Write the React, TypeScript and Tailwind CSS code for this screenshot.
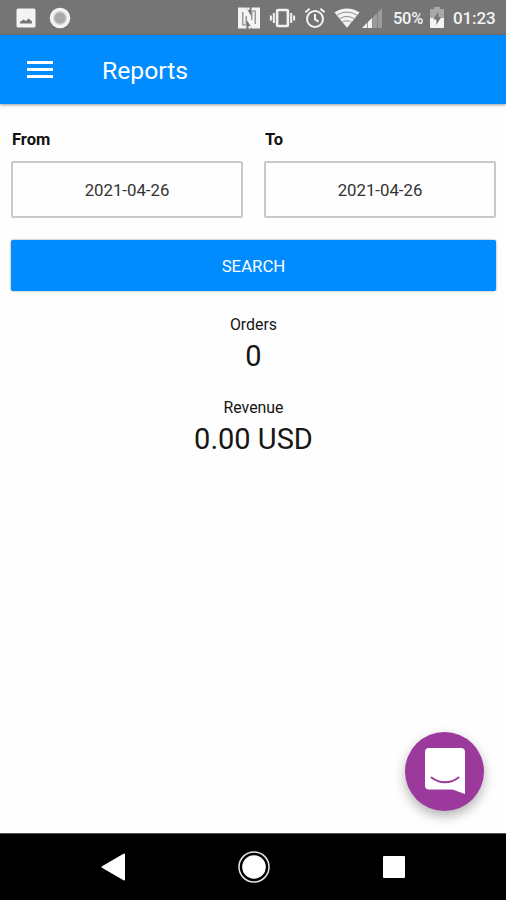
import type { ReactNode } from 'react';

function StatusBar() {
  return (
    <div className="flex h-[35px] flex-shrink-0 items-center bg-[#757575] pl-4 pr-[10px] text-[#f3f3f3]">
      <svg viewBox="0 0 20 20" className="h-5 w-5" fill="currentColor">
        <path fillRule="evenodd" d="M2 0.5h16a1.5 1.5 0 0 1 1.5 1.5v16a1.5 1.5 0 0 1-1.5 1.500H2A1.5 1.5 0 0 1 .5 18V2A1.5 1.5 0 0 1 2 .5zM4 15.500h12v-2l-3.400-3-2.600 2.500-2.600-1.500L4 14z" />
      </svg>
      <svg viewBox="0 0 22 22" className="ml-[12.500px] h-[22px] w-[22px]">
        <circle cx="11" cy="11" r="10.3" fill="currentColor" />
        <circle cx="11" cy="11" r="6" fill="#a9a9a9" stroke="#c6c6c6" strokeWidth="1.5" />
      </svg>

      <div className="ml-auto flex items-center">
        {/* NFC */}
        <svg viewBox="0 0 22 22" className="h-[22px] w-[22px]">
          <path d="M0 .5h8l5.500 9V.500H22v21h-8l-5.500-9v9H0z" fill="currentColor" />
          <path d="M8.500 .5h3v2.500h-2zM10.500 19h2l1 2.500h-3z" fill="currentColor" />
          <path d="M4.800 5v13h3.400V9M17.200 17V4h-3.400v9" fill="none" stroke="#858585" strokeWidth="1.200" />
        </svg>
        {/* Vibrate */}
        <svg viewBox="0 0 28 22" className="ml-[9px] h-[22px] w-7" fill="none" stroke="currentColor" strokeWidth="2">
          <rect x="8.100" y="3" width="10.800" height="16" rx="1" strokeWidth="2.600" />
          <path d="M4.800 6v10M1.900 8.500v5M22.200 6v10M25.100 8.500v5" />
        </svg>
        {/* Alarm */}
        <svg viewBox="0 0 22 22" className="ml-[7px] h-[22px] w-[22px]" fill="none" stroke="currentColor" strokeWidth="2">
          <circle cx="11" cy="12" r="8" />
          <path d="M11 7v5.400l3.600 2.200M1.400 5.300l4.200-3.500M20.600 5.300l-4.200-3.500" />
        </svg>
        {/* Wifi */}
        <svg viewBox="0 0 26 20" className="ml-2 h-5 w-[26px]">
          <path d="M.5 4.5C8 -1 18 -1 25.500 4.500L13 19.800z" fill="currentColor" />
          <path d="M2.600 7.500C9 3 17 3 23.400 7.500M5.500 11C10 7.700 16 7.700 20.500 11M8.300 14.400C11 12.300 15 12.300 17.700 14.400" fill="none" stroke="#8c8c8c" strokeWidth="1" />
        </svg>
        {/* Signal */}
        <svg viewBox="0 0 20 20" className="ml-[2px] h-5 w-5">
          <path d="M20 0v20H0z" fill="#9b9b9b" />
          <path d="M10.500 9.500V20H0z" fill="currentColor" />
          <path d="M5.500 10v10M10.500 5v15M15.500 0v20" stroke="#757575" strokeWidth=".7" />
        </svg>
        <span className="ml-[11px] w-8 whitespace-nowrap pt-[3px] text-[16.500px] font-medium tracking-[-0.3px]">50%</span>
        {/* Battery */}
        <svg viewBox="0 0 14 21" className="ml-[5px] h-[21px] w-[14px]">
          <path d="M4 0h6v2h3q1 0 1 1v8H0V3q0-1 1-1h3z" fill="#a9a9a9" />
          <path d="M0 11h14v9q0 1-1 1H1q-1 0-1-1z" fill="currentColor" />
          <path d="M8.300 4.500L3.200 12.500h3.200v5.500l4.800-8H8.300z" fill="#757575" />
        </svg>
        <span className="ml-[9px] w-[43px] whitespace-nowrap pt-[2px] text-[17px] font-medium tracking-[-0.1px]">01:23</span>
      </div>
    </div>
  );
}

function DateField({ label, value }: { label: string; value: string }) {
  return (
    <div className="flex-1">
      <p className="pl-px text-[16.500px] font-bold leading-5 text-[#111]">{label}</p>
      <button className="mt-[11px] flex h-[57px] w-full items-center justify-center rounded-[2px] border-2 border-[#c9c9c9] pt-[3px] text-[16.800px] text-[#333]">
        {value}
      </button>
    </div>
  );
}

function Stat({ label, children }: { label: string; children: ReactNode }) {
  return (
    <div className="h-[83px] text-center text-[#161616]">
      <p className="text-[15.900px] leading-5">{label}</p>
      <p className="mt-[3px] text-[29px] leading-9">{children}</p>
    </div>
  );
}

export default function App() {
  return (
    <div className="relative flex h-[900px] w-[506px] flex-col overflow-hidden bg-[#fefefe] font-['Roboto',sans-serif]">
      <StatusBar />

      <header className="flex h-[69px] flex-shrink-0 items-center bg-[#008cff] pl-[27px] text-white shadow-[0_1px_3px_rgba(0,0,0,0.4)]">
        <button aria-label="Menu" className="flex w-[26px] flex-col gap-1">
          <span className="h-[3px] bg-white" />
          <span className="h-[3px] bg-white" />
          <span className="h-[3px] bg-white" />
        </button>
        <h1 className="ml-[49px] pt-[3px] text-[24.700px]">Reports</h1>
      </header>

      <main className="flex-1 pl-[11px] pr-2.5 pt-[26px]">
        <div className="flex gap-[21px]">
          <DateField label="From" value="2021-04-26" />
          <DateField label="To" value="2021-04-26" />
        </div>
        <button className="mt-[22px] flex h-[51px] w-full items-center justify-center rounded-[2px] bg-[#008cff] pt-[2px] text-[16.800px] text-white shadow-[0_0_2px_rgba(0,0,0,0.5)]">
          SEARCH
        </button>
        <div className="mt-6">
          <Stat label="Orders">0</Stat>
          <Stat label="Revenue">0.00 USD</Stat>
        </div>
      </main>

      {/* Chat launcher */}
      <button aria-label="Chat" className="absolute bottom-[89.500px] right-[22px] flex h-[79px] w-[79px] items-center justify-center rounded-full bg-[#9b3a9c] shadow-[0_5px_12px_rgba(0,0,0,0.3)]">
        <svg viewBox="0 0 40 46" className="h-[46px] w-10">
          <path d="M4 0h32q4 0 4 4v42L27.500 41.500H4q-4 0-4-4V4q0-4 4-4z" fill="#fff" />
          <path d="M6.500 29.500c8 6.300 19 6.300 27 0" fill="none" stroke="#9b3a9c" strokeWidth="2" strokeLinecap="round" />
        </svg>
      </button>

      <nav className="flex h-[67px] flex-shrink-0 items-center justify-between border-t border-[#555] bg-black pl-[101px] pr-[101px]">
        <svg viewBox="0 0 24 28" className="h-7 w-6">
          <path d="M23 1.500v25L1.500 14z" fill="#fff" stroke="#fff" strokeWidth="2" strokeLinejoin="round" />
        </svg>
        <svg viewBox="0 0 32 32" className="h-8 w-8">
          <circle cx="16" cy="16" r="15" fill="none" stroke="#e8e8e8" strokeWidth="1.500" />
          <circle cx="16" cy="16" r="11.800" fill="#fff" />
        </svg>
        <span className="h-[22px] w-[22px] rounded-[1px] bg-white" />
      </nav>
    </div>
  );
}
